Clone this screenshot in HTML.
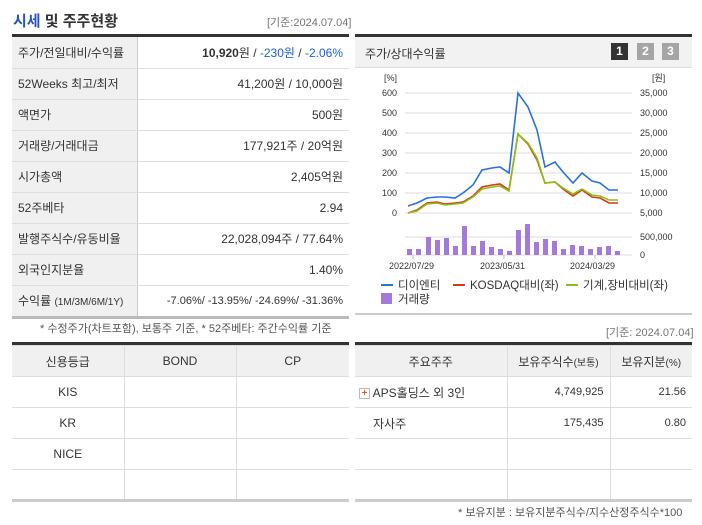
<!DOCTYPE html>
<html><head><meta charset="utf-8"><style>
body{margin:0;width:702px;height:525px;background:#fff;font-family:"Liberation Sans","Noto Sans CJK KR",sans-serif;font-size:12px;color:#333;position:relative;overflow:hidden}
.a{position:absolute}
table{border-collapse:collapse;position:absolute;table-layout:fixed;font-size:12px}
td{border-bottom:1px solid #ddd;padding:0 6px;height:30px;white-space:nowrap;box-sizing:border-box}
.l td{height:31px}
.l td.k{background:#f0f0f0;border-right:1px solid #ccc;color:#333}
.l td.v{text-align:right;color:#333}
.b{color:#1a5fd4}
.g td,.g th{border:1px solid #ddd;height:31px;text-align:center;font-weight:normal;font-size:12px;box-sizing:border-box}
.g th{background:#f0f0f0}
</style></head><body>
<div class="a" style="left:13px;top:10px;font-size:15px;font-weight:bold;color:#333"><span style="color:#2b57b3">시세</span> 및 주주현황</div>
<div class="a" style="left:267px;top:14px;color:#777;font-size:11px">[기준:2024.07.04]</div>
<div class="a" style="left:12px;top:34px;width:337px;height:3px;background:#333"></div>
<table class="l" style="left:12px;top:37px;width:337px">
<col style="width:125px"><col>
<tr><td class="k">주가/전일대비/수익률</td><td class="v"><b>10,920</b>원 / <span class="b">-230원</span> / <span class="b">-2.06%</span></td></tr>
<tr><td class="k">52Weeks 최고/최저</td><td class="v">41,200원 / 10,000원</td></tr>
<tr><td class="k">액면가</td><td class="v">500원</td></tr>
<tr><td class="k">거래량/거래대금</td><td class="v">177,921주 / 20억원</td></tr>
<tr><td class="k">시가총액</td><td class="v">2,405억원</td></tr>
<tr><td class="k">52주베타</td><td class="v">2.94</td></tr>
<tr><td class="k">발행주식수/유동비율</td><td class="v">22,028,094주 / 77.64%</td></tr>
<tr><td class="k">외국인지분율</td><td class="v">1.40%</td></tr>
<tr><td class="k">수익률 <span style="font-size:10px">(1M/3M/6M/1Y)</span></td><td class="v b" style="font-size:11px">-7.06%/ -13.95%/ -24.69%/ -31.36%</td></tr>
</table>
<div class="a" style="left:12px;top:316px;width:337px;height:3px;background:#bbb"></div>
<div class="a" style="left:40px;top:320px;font-size:11px;color:#555">* 수정주가(차트포함), 보통주 기준, * 52주베타: 주간수익률 기준</div>

<div class="a" style="left:355px;top:34px;width:337px;height:3px;background:#333"></div>
<div class="a" style="left:355px;top:37px;width:337px;height:30px;background:#f2f2f2;border-bottom:1px solid #ddd"></div>
<div class="a" style="left:365px;top:45px;font-size:12px">주가/상대수익률</div>
<div class="a" style="left:611px;top:43px;width:17px;height:17px;background:#333;color:#fff;font-weight:bold;text-align:center;line-height:17px">1</div>
<div class="a" style="left:637px;top:43px;width:17px;height:17px;background:#a5a5a5;color:#fff;font-weight:bold;text-align:center;line-height:17px">2</div>
<div class="a" style="left:662px;top:43px;width:17px;height:17px;background:#a5a5a5;color:#fff;font-weight:bold;text-align:center;line-height:17px">3</div>
<svg class="a" style="left:355px;top:68px" width="347" height="245" viewBox="355 68 347 245" font-family="Liberation Sans,Noto Sans CJK KR,sans-serif" font-size="9" fill="#333">
<g stroke="#ddd" stroke-width="1">
<line x1="405" y1="93" x2="632" y2="93"/><line x1="405" y1="113" x2="632" y2="113"/><line x1="405" y1="133" x2="632" y2="133"/><line x1="405" y1="153" x2="632" y2="153"/><line x1="405" y1="173" x2="632" y2="173"/><line x1="405" y1="193" x2="632" y2="193"/><line x1="405" y1="213" x2="632" y2="213"/><line x1="405" y1="237" x2="632" y2="237"/><line x1="405" y1="255" x2="632" y2="255"/>
</g>
<text x="384" y="81">[%]</text><text x="652" y="81">[원]</text>
<g text-anchor="end"><text x="397" y="96">600</text><text x="397" y="116">500</text><text x="397" y="136">400</text><text x="397" y="156">300</text><text x="397" y="176">200</text><text x="397" y="196">100</text><text x="397" y="216">0</text></g>
<g><text x="640" y="96">35,000</text><text x="640" y="116">30,000</text><text x="640" y="136">25,000</text><text x="640" y="156">20,000</text><text x="640" y="176">15,000</text><text x="640" y="196">10,000</text><text x="640" y="216">5,000</text><text x="640" y="240">500,000</text><text x="640" y="258">0</text></g>
<g fill="#a37ad9">
<rect x="407" y="249" width="5" height="6"/><rect x="416" y="249" width="5" height="6"/><rect x="426" y="237" width="5" height="18"/><rect x="435" y="240" width="5" height="15"/><rect x="444" y="238" width="5" height="17"/><rect x="453" y="246" width="5" height="9"/><rect x="462" y="226" width="5" height="29"/><rect x="471" y="246" width="5" height="9"/><rect x="480" y="241" width="5" height="14"/><rect x="489" y="247" width="5" height="8"/><rect x="498" y="249" width="5" height="6"/><rect x="507" y="251" width="5" height="4"/><rect x="516" y="230" width="5" height="25"/><rect x="525" y="224" width="5" height="31"/><rect x="534" y="242" width="5" height="13"/><rect x="543" y="239" width="5" height="16"/><rect x="552" y="241" width="5" height="14"/><rect x="561" y="249" width="5" height="6"/><rect x="570" y="245" width="5" height="10"/><rect x="579" y="246" width="5" height="9"/><rect x="588" y="249" width="5" height="6"/><rect x="597" y="247" width="5" height="8"/><rect x="606" y="246" width="5" height="9"/><rect x="615" y="251" width="5" height="4"/>
</g>
<polyline fill="none" stroke="#d63a10" stroke-width="1.6" points="408,213 417,210 427,203 437,202 445,204 455,203 463,202 473,196 482,187 492,185 500,184 509,190 518,134 528,144 537,160 545,183 555,182 563,189 573,196 582,190 592,197 600,198 609,203 618,203"/>
<polyline fill="none" stroke="#8ac01a" stroke-width="1.6" points="408,213 417,211 427,204 437,203 445,205 455,204 463,203 473,197 482,189 492,187 500,186 509,191 518,134 528,143 537,158 545,183 555,182 563,188 573,194 582,189 592,195 600,196 609,200 618,200"/>
<polyline fill="none" stroke="#2b6fe0" stroke-width="1.6" points="408,206 417,203 427,198 437,197 445,197 455,198 463,193 473,185 482,170 492,168 500,167 509,173 518,93 528,107 537,130 545,167 555,162 563,172 573,183 582,173 592,181 600,183 609,190 618,190"/>
<g stroke="#bbb"><line x1="413" y1="255" x2="413" y2="259"/><line x1="504" y1="255" x2="504" y2="259"/><line x1="595" y1="255" x2="595" y2="259"/></g>
<text x="389" y="269">2022/07/29</text><text x="480" y="269">2023/05/31</text><text x="570" y="269">2024/03/29</text>
<g font-size="11.5"><line x1="381" y1="285" x2="393" y2="285" stroke="#2b6fe0" stroke-width="2"/><text x="398" y="289">디이엔티</text>
<line x1="453" y1="285" x2="465" y2="285" stroke="#d63a10" stroke-width="2"/><text x="470" y="289">KOSDAQ대비(좌)</text>
<line x1="566" y1="285" x2="578" y2="285" stroke="#8ac01a" stroke-width="2"/><text x="583" y="289">기계,장비대비(좌)</text>
<rect x="381" y="293" width="11" height="11" fill="#a37ad9"/><text x="398" y="303">거래량</text></g>
</svg>
<div class="a" style="left:355px;top:313px;width:337px;height:2px;background:#ccc"></div>
<div class="a" style="left:606px;top:324px;font-size:11px;color:#777">[기준: 2024.07.04]</div>

<div class="a" style="left:12px;top:342px;width:337px;height:3px;background:#333"></div>
<table class="g" style="left:12px;top:345px;width:337px;border-bottom:3px solid #ccc">
<col style="width:112px"><col style="width:112px"><col>
<tr><th style="border-left:0">신용등급</th><th>BOND</th><th style="border-right:0">CP</th></tr>
<tr><td style="border-left:0">KIS</td><td></td><td style="border-right:0"></td></tr>
<tr><td style="border-left:0">KR</td><td></td><td style="border-right:0"></td></tr>
<tr><td style="border-left:0">NICE</td><td></td><td style="border-right:0"></td></tr>
<tr><td style="border-left:0"></td><td></td><td style="border-right:0"></td></tr>
</table>
<div class="a" style="left:355px;top:342px;width:337px;height:3px;background:#333"></div>
<table class="g" style="left:355px;top:345px;width:337px;border-bottom:3px solid #ccc">
<col style="width:152px"><col style="width:103px"><col>
<tr><th style="border-left:0">주요주주</th><th>보유주식수<span style="font-size:10px">(보통)</span></th><th style="border-right:0">보유지분<span style="font-size:10px">(%)</span></th></tr>
<tr><td style="border-left:0;text-align:left;padding-left:4px"><span style="display:inline-block;width:9px;height:9px;border:1px solid #bbb;color:#e85a10;font-size:10px;line-height:9px;text-align:center;font-weight:bold;vertical-align:middle">+</span> APS홀딩스 외 3인</td><td style="text-align:right;font-size:11px">4,749,925</td><td style="text-align:right;border-right:0;font-size:11px">21.56</td></tr>
<tr><td style="border-left:0;text-align:left;padding-left:18px">자사주</td><td style="text-align:right;font-size:11px">175,435</td><td style="text-align:right;border-right:0;font-size:11px">0.80</td></tr>
<tr><td style="border-left:0"></td><td></td><td style="border-right:0"></td></tr>
<tr><td style="border-left:0"></td><td></td><td style="border-right:0"></td></tr>
</table>
<div class="a" style="left:458px;top:504px;font-size:11px;color:#555">* 보유지분 : 보유지분주식수/지수산정주식수*100</div>
</body></html>
